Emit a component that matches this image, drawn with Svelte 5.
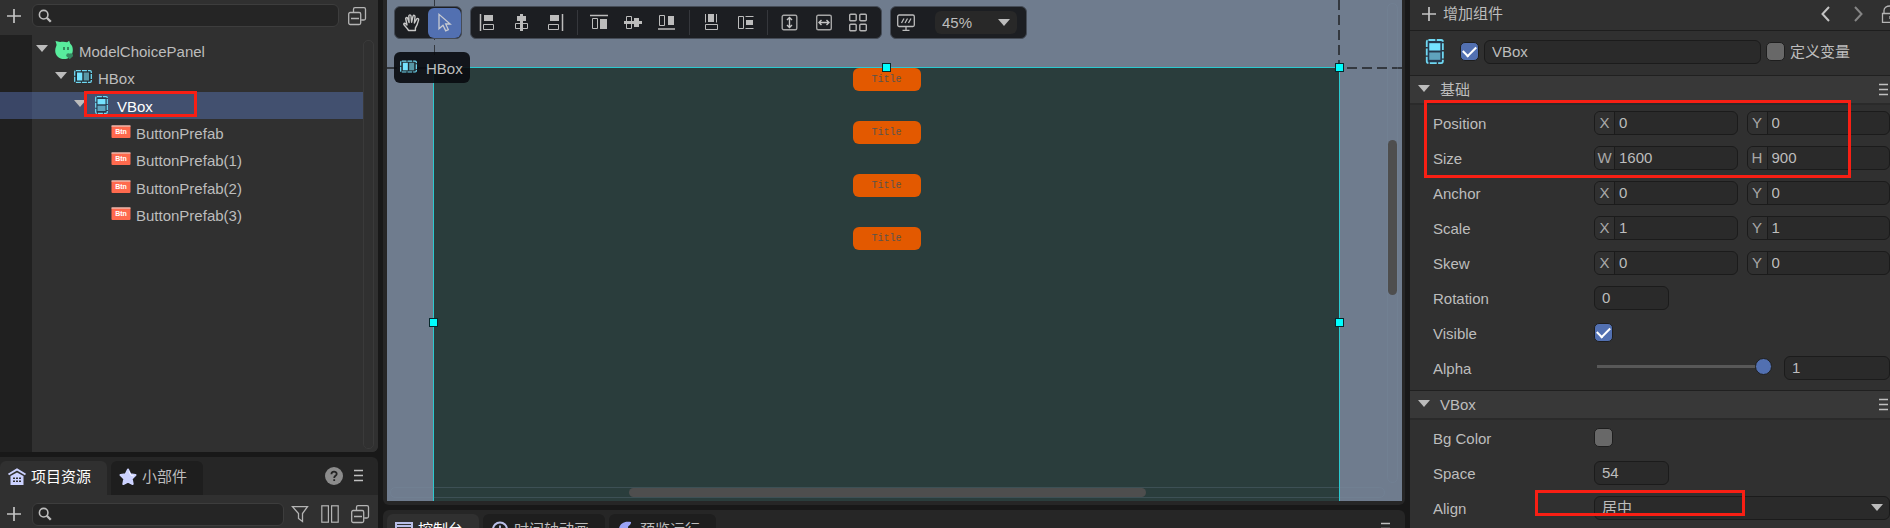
<script>
	const tree = [
		{ name: "ModelChoicePanel", level: 0, icon: "prefab", open: true },
		{ name: "HBox", level: 1, icon: "hbox", open: true },
		{ name: "VBox", level: 2, icon: "vbox", open: true },
		{ name: "ButtonPrefab", level: 3, icon: "btn" },
		{ name: "ButtonPrefab(1)", level: 3, icon: "btn" },
		{ name: "ButtonPrefab(2)", level: 3, icon: "btn" },
		{ name: "ButtonPrefab(3)", level: 3, icon: "btn" },
	];

	const alignTools = [
		["alignLeft", "alignCenter", "alignRight"],
		["alignTop", "alignMiddle", "alignBottom"],
		["spaceV", "spaceH"],
		["fitHeight", "fitWidth", "grid"],
	];

	const bottomTabs = [
		{ name: "控制台", icon: "console" },
		{ name: "时间轴动画", icon: "clock" },
		{ name: "预览运行", icon: "rocket" },
	];

	let selected = $state("VBox");
	let tool = $state("select");
	let assetTab = $state("项目资源");
	let bottomTab = $state("控制台");
	let nodeName = $state("VBox");
	let alpha = $state(1);

	let transform = $state([
		{ label: "Position", keys: ["X", "Y"], values: ["0", "0"] },
		{ label: "Size", keys: ["W", "H"], values: ["1600", "900"] },
		{ label: "Anchor", keys: ["X", "Y"], values: ["0", "0"] },
		{ label: "Scale", keys: ["X", "Y"], values: ["1", "1"] },
		{ label: "Skew", keys: ["X", "Y"], values: ["0", "0"] },
	]);

	const icons = {
		plus: `<path d="M9 2v14M2 9h14" stroke="#c4c4c4" stroke-width="1.7"/>`,
		search: `<circle cx="7.5" cy="7.5" r="4.8" fill="none" stroke="#bdbdbd" stroke-width="1.8"/><path d="M11 11l4.5 4.500" stroke="#bdbdbd" stroke-width="2.6"/>`,
		collapse: `<g fill="none" stroke="#b4b4b4" stroke-width="1.3"><rect x="0.7" y="5.5" width="12" height="12" rx="1.5"/><path d="M5.5 5V2.2a1.5 1.5 0 0 1 1.5-1.5h9a1.5 1.5 0 0 1 1.5 1.5v9.3a1.5 1.5 0 0 1-1.5 1.5h-2.8M3 11.5h8"/></g>`,
		menu: `<path d="M4 3.500h9M4 8.500h9M4 13.500h9" stroke="#c0c0c0" stroke-width="1.400"/>`,
		filter: `<path d="M1.5 1.7h15L11.500 8.500v8L7.500 13.500v-5z" fill="none" stroke="#b4b4b4" stroke-width="1.3"/>`,
		columns: `<g fill="none" stroke="#b4b4b4" stroke-width="1.2"><rect x="0.8" y="0.8" width="6.6" height="16.4"/><rect x="10.6" y="0.8" width="6.6" height="16.4"/></g>`,
		help: `<circle cx="9" cy="9" r="9" fill="#8c8c8c"/><path d="M6.4 7.2c0-3.4 5.3-3.3 5.3-.3 0 1.9-2.5 1.900-2.500 4M9.200 12.200v1.800" fill="none" stroke="#252525" stroke-width="1.8"/>`,
		prefab: `<path d="M.5 0c2 .2 3 .9 4.600 1.100 1.900-.5 5-.5 7 .2l2-1.500 1.200 3c2.200 2 2.500 4 2.500 6.400 0 5-3.800 8.800-8.600 8.800C4 18 .2 14.500 .2 9.700.2 6.500 1.700 5 1.500 3.500z" fill="#58ec9d"/><path d="M9 6v3M13 6v3" stroke="#23573f" stroke-width="1.300"/><circle cx="13.300" cy="14.300" r="2" fill="#358860"/><circle cx="16" cy="14.300" r="2" fill="#358860"/><path d="M11.500 15.300h6.300L14.700 18.300z" fill="#358860"/>`,
		hbox: `<rect x=".7" y="2.700" width="16.600" height="11.600" rx="1.200" fill="#202b31" stroke="#6fd8f2" stroke-width="1.300" stroke-dasharray="5 1"/><path d="M3 4.500h5.300v8H3z" fill="#75e3ff"/><path d="M9.700 4.500H15v8H9.700z" fill="#5897a6"/>`,
		vbox: `<rect x="2.700" y=".7" width="11.600" height="16.600" rx="1.200" fill="#26394d" stroke="#6fd8f2" stroke-width="1.300" stroke-dasharray="5 1"/><path d="M4.500 3h8v5.300h-8z" fill="#75e3ff"/><path d="M4.500 9.700h8V15h-8z" fill="#5fa3bd"/>`,
		btn: `<rect x="-.5" y="2.500" width="19" height="12.500" rx="1" fill="#ff6a4e"/><path d="M-.5 3h19" stroke="#e8dcd8"/><text x="9" y="11" text-anchor="middle" font-size="7" font-weight="700" font-family="Liberation Sans, sans-serif" fill="#fff">Btn</text>`,
		house: `<path d="M.5 6.500L9 1.500l8.500 5" fill="none" stroke="#ccd2ff" stroke-width="2"/><path d="M2.500 8L9 4.500 15.500 8v9h-13z" fill="#ccd2ff"/><path d="M5 9.500h2V11H5zM8 9.500h2V11H8zM11 9.500h2V11h-2zM5 12.500h2V14H5zM8 12.500h2V14H8zM11 12.500h2V14h-2z" fill="#303030"/>`,
		star: `<path d="M9 1.500l2.300 4.800 5.200.7-3.800 3.700 1 5.300L9 13.500 4.300 16l1-5.300L1.500 7l5.200-.7z" fill="#ccd2ff" stroke="#ccd2ff" stroke-width="2" stroke-linejoin="round"/><path d="M10 3.500l2 3.800 3 .7" fill="none" stroke="#fff" stroke-width=".8"/>`,
		console: `<rect x="1" y="2" width="16" height="14" fill="none" stroke="#b9bfe8" stroke-width="2"/><path d="M1 5h16M4 9h6M4 12h9" stroke="#b9bfe8" stroke-width="2"/>`,
		clock: `<circle cx="9" cy="8.500" r="7" fill="none" stroke="#b9bfe8" stroke-width="2"/><path d="M9 4.500V10l4 1.500" fill="none" stroke="#b9bfe8" stroke-width="1.800"/>`,
		rocket: `<path d="M14 1C7-.5 1.500 3 2 9.500c.5 5 5 7 9 6 4-1.500 4.500-5 4-8-1.500 1.500-4 1-4-1C11 4.500 14.500 4 14 1z" fill="#9aa3f5"/>`,
		hand: `<path d="M5.500 16.500C4.500 14 1 11.500.700 10c.600-1.300 2-.6 3.300 1L2.700 4.500c.3-1.500 1.700-1.200 2 0l1.400 4-.3-6.500c.4-1.500 1.900-1.400 2.200 0l.6 6.200 1.400-6c.6-1.400 2.100-1 2 .5l-.6 6.300 2.300-4c.9-1.200 2.200-.4 1.900.9-.8 3.400-1.700 5.800-3.200 8.100v2.500z" fill="none" stroke="#c8c8c8" stroke-width="1.400" stroke-linejoin="round"/>`,
		select: `<path d="M3 .3v14.500l4-3.600 2.700 5.600 2.600-1.200-2.600-5.600h4.500z" fill="none" stroke="#c8cbd2" stroke-width="1.300"/>`,
		alignLeft: `<g stroke="#bcbcbc"><path d="M1.500 0v17" stroke-width="1.500"/><path d="M5 1h9v6H5z" fill="#bcbcbc" stroke="none"/><path d="M4.500 10.500h10v5h-10z" fill="none"/></g>`,
		alignCenter: `<g fill="#bcbcbc"><path d="M7 0h3v17H7z"/><path d="M4 2h9v5H4z"/><path d="M2.500 9.500h12v5h-12z" fill="#191b1f" stroke="#bcbcbc"/><path d="M7 9h3v8H7z"/></g>`,
		alignRight: `<g stroke="#bcbcbc"><path d="M15.500 0v17" stroke-width="1.500"/><path d="M3 1h9v6H3z" fill="#bcbcbc" stroke="none"/><path d="M1.500 10.500h10v5h-10z" fill="none"/></g>`,
		alignTop: `<g stroke="#bcbcbc"><path d="M-1 1.500h18" stroke-width="1.500"/><path d="M9 5h7v10H9z" fill="#bcbcbc" stroke="none"/><path d="M1.500 4.500h5v10h-5z" fill="none"/></g>`,
		alignMiddle: `<g fill="#bcbcbc"><path d="M-1 7h18v3H-1z"/><path d="M9 4h5v9H9z"/><path d="M1.500 2.500h5v12h-5z" fill="#191b1f" stroke="#bcbcbc"/><path d="M-1 7h8v3h-8z"/></g>`,
		alignBottom: `<g stroke="#bcbcbc"><path d="M-1 15h17" stroke-width="1.500"/><path d="M9 2h6v9H9z" fill="#bcbcbc" stroke="none"/><path d="M.5 1.500h5v10h-5z" fill="none"/></g>`,
		spaceV: `<path d="M5 0h6v8H5z" fill="#bcbcbc"/><path d="M2.500 0v8.500M13.500 0v8.500M2.500 10.500h12v5h-12z" fill="none" stroke="#bcbcbc"/>`,
		spaceH: `<path d="M9 6h7v5H9z" fill="#bcbcbc"/><path d="M1.500 2.500h5v12h-5zM8.500 2.500h8M8.500 14.500h8" fill="none" stroke="#bcbcbc"/>`,
		fitHeight: `<rect x="1.200" y="1.200" width="14.600" height="14.600" rx="1.500" fill="none" stroke="#a5a5a5" stroke-width="1.400"/><path d="M8.500 3.500v10M6 6l2.500-2.500L11 6M6 11l2.500 2.500L11 11" fill="none" stroke="#c4c4c4" stroke-width="1.400"/>`,
		fitWidth: `<rect x="1.700" y="1.200" width="14.600" height="14.600" rx="1.500" fill="none" stroke="#a5a5a5" stroke-width="1.400"/><path d="M4 8.500h10M6.500 6L4 8.500 6.500 11M11.500 6L14 8.500 11.500 11" fill="none" stroke="#c4c4c4" stroke-width="1.400"/>`,
		grid: `<g fill="none" stroke="#b4b4b4" stroke-width="1.400"><rect x=".7" y=".2" width="6.500" height="6.500" rx="1"/><rect x="10.800" y=".2" width="6.500" height="6.500" rx="1"/><rect x=".7" y="10.300" width="6.500" height="6.500" rx="1"/><rect x="10.800" y="10.300" width="6.500" height="6.500" rx="1"/></g>`,
		monitor: `<g fill="none" stroke="#bcbcbc" stroke-width="1.300"><rect x=".7" y="1" width="16.600" height="11.500" rx="1.500"/><path d="M9 13v3.500M5.500 16.300h7M4.500 9L7 4.500M8 9l2.500-4.500M11.500 9L14 4.500"/></g>`,
		prev: `<path d="M12 2L5.500 9l6.500 7" fill="none" stroke="#c4c4c4" stroke-width="2"/>`,
		next: `<path d="M6 2l6.500 7L6 16" fill="none" stroke="#858585" stroke-width="2"/>`,
		lock: `<path d="M1.500 8.500h15v8.800h-15zM3 8V5.500c0-6 12-6 12 0V8M9 11v3" fill="none" stroke="#b4b4b4" stroke-width="1.300"/>`,
	};
</script>

{#snippet icon(name)}
	<svg class="icon" viewBox="0 0 18 18" aria-hidden="true">{@html icons[name]}</svg>
{/snippet}

{#snippet caret()}
	<svg class="caret" viewBox="0 0 12 7" aria-hidden="true"><path d="M0 0h12L6 7z" fill="#bcbcbc" /></svg>
{/snippet}

<div class="editor">
	<aside class="left">
		<section class="panel hierarchy">
			<div class="searchbar">
				<button class="icon-btn" aria-label="Add node">{@render icon("plus")}</button>
				<label class="search">
					{@render icon("search")}
					<input type="text" aria-label="Search nodes" />
				</label>
				<button class="icon-btn end" aria-label="Collapse all">{@render icon("collapse")}</button>
			</div>
			<div class="tree-wrap">
				<div class="tree">
					{#each tree as node}
						<button
							class="node"
							class:selected={selected === node.name}
							style="padding-left: {36 + node.level * 19}px"
							onclick={() => (selected = node.name)}
						>
							<span class="twisty">{#if node.open}{@render caret()}{/if}</span>
							{@render icon(node.icon)}
							<span class="node-name">{node.name}</span>
							{#if node.name === "VBox"}<span class="mark mark-node"></span>{/if}
						</button>
					{/each}
				</div>
				<div class="track"></div>
			</div>
		</section>

		<section class="panel assets">
			<div class="tabs">
				{#each [["项目资源", "house"], ["小部件", "star"]] as [name, glyph]}
					<button class="tab" class:active={assetTab === name} onclick={() => (assetTab = name)}>
						{@render icon(glyph)}
						{name}
					</button>
				{/each}
				<div class="tab-tools">
					<button class="icon-btn" aria-label="Help">{@render icon("help")}</button>
					<button class="icon-btn" aria-label="Menu">{@render icon("menu")}</button>
				</div>
			</div>
			<div class="searchbar asset-bar">
				<button class="icon-btn" aria-label="Add asset">{@render icon("plus")}</button>
				<label class="search">
					{@render icon("search")}
					<input type="text" aria-label="Search assets" />
				</label>
				<div class="asset-tools">
					<button class="icon-btn" aria-label="Filter">{@render icon("filter")}</button>
					<button class="icon-btn" aria-label="Two columns">{@render icon("columns")}</button>
					<button class="icon-btn" aria-label="Collapse all">{@render icon("collapse")}</button>
				</div>
			</div>
		</section>
	</aside>

	<main class="center">
		<section class="panel scene">
			<div class="viewport">
				<div class="guide guide-left"></div>
				<div class="guide guide-right"></div>
				<div class="guide guide-top"></div>

				<div class="artboard">
					{#each [1, 2, 3, 4] as n (n)}
						<button class="prefab">Title</button>
					{/each}
					<i class="handle top"></i>
					<i class="handle corner"></i>
					<i class="handle west"></i>
					<i class="handle east"></i>
				</div>

				<div class="toolbars">
					<div class="toolbar modes">
						{#each ["hand", "select"] as mode}
							<button class="mode" class:active={tool === mode} aria-label={mode} onclick={() => (tool = mode)}>
								{@render icon(mode)}
							</button>
						{/each}
					</div>
					<div class="toolbar aligns">
						{#each alignTools as group}
							<div class="group">
								{#each group as name}
									<button class="align" aria-label={name}>{@render icon(name)}</button>
								{/each}
							</div>
						{/each}
					</div>
					<div class="toolbar view">
						<button class="icon-btn" aria-label="Resolution">{@render icon("monitor")}</button>
						<div class="select zoom">
							<select aria-label="Zoom">
								<option>45%</option>
								<option>100%</option>
							</select>
							{@render caret()}
						</div>
					</div>
				</div>
				<div class="crumb">{@render icon("hbox")}<span>HBox</span></div>

				<div class="vtrack"><div class="vthumb"></div></div>
				<div class="htrack"><div class="hthumb"></div></div>
			</div>
		</section>

		<section class="panel output">
			<div class="tabs">
				{#each bottomTabs as tab}
					<button class="tab" class:active={bottomTab === tab.name} onclick={() => (bottomTab = tab.name)}>
						{@render icon(tab.icon)}
						{tab.name}
					</button>
				{/each}
				<div class="tab-tools">
					<button class="icon-btn" aria-label="Menu">{@render icon("menu")}</button>
				</div>
			</div>
		</section>
	</main>

	<aside class="inspector">
		<header class="add-row">
			<button class="add">{@render icon("plus")}增加组件</button>
			<div class="history">
				<button class="icon-btn" aria-label="Back">{@render icon("prev")}</button>
				<button class="icon-btn" aria-label="Forward">{@render icon("next")}</button>
				<button class="icon-btn" aria-label="Lock">{@render icon("lock")}</button>
			</div>
		</header>

		<div class="name-row">
			<span class="type-icon">{@render icon("vbox")}</span>
			<input type="checkbox" aria-label="Active" checked />
			<input class="field name" type="text" aria-label="Name" bind:value={nodeName} />
			<input id="define" type="checkbox" />
			<label for="define">定义变量</label>
		</div>

		<section>
			<h2>{@render caret()}<span>基础</span><button class="icon-btn" aria-label="Menu">{@render icon("menu")}</button></h2>
			<div class="props">
				<span class="mark mark-transform"></span>
				{#each transform as row}
					<div class="prop">
						<label for={row.label}>{row.label}</label>
						<div class="pair">
							<div class="field keyed">
								<span>{row.keys[0]}</span>
								<input id={row.label} type="text" bind:value={row.values[0]} />
							</div>
							<div class="field keyed">
								<span>{row.keys[1]}</span>
								<input type="text" aria-label="{row.label} {row.keys[1]}" bind:value={row.values[1]} />
							</div>
						</div>
					</div>
				{/each}
				<div class="prop">
					<label for="rotation">Rotation</label>
					<input id="rotation" class="field short" type="text" value="0" />
				</div>
				<div class="prop">
					<label for="visible">Visible</label>
					<input id="visible" type="checkbox" checked />
				</div>
				<div class="prop">
					<label for="alpha">Alpha</label>
					<div class="alpha">
						<input id="alpha" type="range" min="0" max="1" step="0.01" bind:value={alpha} />
						<input class="field" type="text" aria-label="Alpha value" bind:value={alpha} />
					</div>
				</div>
			</div>
		</section>

		<section>
			<h2>{@render caret()}<span>VBox</span><button class="icon-btn" aria-label="Menu">{@render icon("menu")}</button></h2>
			<div class="props">
				<div class="prop">
					<label for="bg">Bg Color</label>
					<input id="bg" type="checkbox" />
				</div>
				<div class="prop">
					<label for="space">Space</label>
					<input id="space" class="field short" type="text" value="54" />
				</div>
				<div class="prop">
					<label for="align">Align</label>
					<div class="select">
						<select id="align" class="field">
							<option>居中</option>
							<option>左对齐</option>
							<option>右对齐</option>
						</select>
						{@render caret()}
					</div>
					<span class="mark mark-align"></span>
				</div>
			</div>
		</section>
	</aside>
</div>

<style>
	:global(body) {
		background: #181818;
		overflow: hidden;
	}

	.editor {
		display: grid;
		grid-template-columns: 378px minmax(0, 1fr) 480px;
		gap: 5px;
		height: 100vh;
		overflow: hidden;
		background: #181818;
		color: #bdbdbd;
		font: 15px/20px "Liberation Sans", "Noto Sans CJK SC", sans-serif;
	}

	.editor * {
		box-sizing: border-box;
	}

	button,
	input,
	select {
		margin: 0;
		padding: 0;
		border: 0;
		background: none;
		color: inherit;
		font: inherit;
		outline: none;
	}

	.icon {
		display: block;
		flex: none;
		width: 18px;
		height: 18px;
		overflow: visible;
	}

	.caret {
		display: block;
		flex: none;
		width: 12px;
		height: 7px;
	}

	.icon-btn {
		display: flex;
		flex: none;
	}

	.mark {
		position: absolute;
		z-index: 2;
		border: 3px solid #f81f14;
		pointer-events: none;
	}

	/* left column */
	.left,
	.center {
		display: grid;
		gap: 5px;
		min-height: 0;
	}

	.left {
		grid-template-rows: minmax(0, 1fr) 71px;
	}

	.panel {
		overflow: hidden;
		background: #262626;
	}

	.hierarchy {
		display: flex;
		flex-direction: column;
		background: #303030;
		border-radius: 0 0 6px 0;
	}

	.searchbar {
		display: flex;
		align-items: center;
		height: 35px;
		padding: 0 12px 4px 5px;
	}

	.search {
		display: flex;
		flex: 1;
		align-items: center;
		height: 23px;
		margin-left: 9px;
		padding-left: 4px;
		background: #252525;
		border: 1px solid #3d3d3d;
		border-radius: 6px;
	}

	.search .icon {
		width: 16px;
		height: 16px;
	}

	.search input {
		flex: 1;
		min-width: 0;
	}

	.end {
		margin-left: 9px;
	}

	.tree-wrap {
		position: relative;
		display: flex;
		flex: 1;
		padding: 2px 4px 3px 0;
		background: linear-gradient(90deg, #202020 32px, #303030 32px);
	}

	.tree {
		display: grid;
		flex: 1;
		grid-template-rows: repeat(7, 1fr);
		height: 192px;
	}

	.node {
		position: relative;
		display: flex;
		align-items: center;
		text-align: left;
	}

	.node .icon {
		margin: 0 6px 2px 7px;
	}

	.twisty {
		width: 12px;
		padding-bottom: 5px;
	}

	.node-name {
		padding-top: 2px;
	}

	.selected {
		background: linear-gradient(90deg, #3a4666 32px, #42506f 32px);
		color: #fff;
	}

	.mark-node {
		top: -1px;
		left: 84px;
		width: 113px;
		height: 26px;
	}

	.track {
		width: 11px;
		border: 1px solid #3a3a3a;
		border-radius: 5px;
		margin-top: 3px;
	}

	.assets {
		border-radius: 0 6px 0 0;
	}

	.tabs {
		display: flex;
		gap: 4px;
		height: 38px;
		padding-top: 4px;
	}

	.tab {
		display: flex;
		align-items: center;
		gap: 5px;
		padding: 0 16px 2px 8px;
		background: #1e1e1e;
		border-radius: 6px 6px 0 0;
	}

	.tab.active {
		background: #303030;
		color: #fff;
	}

	.tab-tools {
		display: flex;
		align-items: center;
		gap: 7px;
		margin-left: auto;
		padding: 0 10px 4px 0;
	}

	.asset-bar {
		height: 38px;
		padding: 0 9px 0 5px;
		background: #303030;
	}

	.asset-tools {
		display: flex;
		gap: 12px;
		margin-left: 7px;
	}

	/* scene */
	.center {
		grid-template-rows: minmax(0, 1fr) 18px;
	}

	.scene {
		padding: 0 3px 4px 4px;
		border-radius: 0 0 6px 6px;
	}

	.viewport {
		position: relative;
		height: 100%;
		overflow: hidden;
		background: #6f7c8e;
	}

	.artboard {
		position: relative;
		display: flex;
		flex-direction: column;
		align-items: center;
		gap: 30px;
		height: 511px;
		margin: 67px 62px 0 46px;
		background: #2a3d3c;
		border: 1px solid #2bc9cf;
	}

	.prefab {
		width: 68px;
		height: 23px;
		flex: none;
		background: #e35900;
		border-radius: 6px;
		color: #59544c;
		font: 10px/23px "Liberation Mono", monospace;
	}

	.guide {
		position: absolute;
		background: repeating-linear-gradient(180deg, #33383f 0 10px, transparent 10px 15px);
	}

	.guide-left,
	.guide-right {
		top: 0;
		width: 1px;
		height: 67px;
	}

	.guide-left {
		left: 47px;
	}

	.guide-right {
		right: 62px;
		width: 2px;
	}

	.guide-top {
		top: 67px;
		left: 0;
		right: 0;
		height: 2px;
		background: repeating-linear-gradient(90deg, #33383f 0 10px, transparent 10px 15px);
	}

	.handle {
		position: absolute;
		width: 9px;
		height: 9px;
		background: #0ff;
		border: 1px solid #06292c;
	}

	.top {
		top: -5px;
		left: calc(50% - 5px);
	}

	.corner {
		top: -5px;
		right: -5px;
	}

	.west {
		top: calc(50% - 5px);
		left: -5px;
	}

	.east {
		top: calc(50% - 5px);
		right: -5px;
	}

	.toolbars {
		position: absolute;
		top: 6px;
		left: 7px;
		display: flex;
		gap: 8px;
	}

	.toolbar {
		display: flex;
		align-items: center;
		height: 33px;
		background: #1c1e22;
		border: 1px solid #454c57;
		border-radius: 6px;
	}

	.mode {
		display: grid;
		place-items: center;
		width: 33px;
		height: 30px;
	}

	.mode.active {
		background: #5270b1;
		border-radius: 6px;
	}

	.aligns {
		padding-right: 6px;
	}

	.group {
		display: flex;
	}

	.group + .group {
		margin-left: 4px;
		padding-left: 5px;
		border-left: 1px solid #35373c;
	}

	.align {
		display: grid;
		place-items: center;
		width: 34px;
		height: 25px;
	}

	.view {
		padding: 0 9px 0 6px;
		gap: 20px;
	}

	.select {
		position: relative;
		display: flex;
		align-items: center;
	}

	.select select {
		width: 100%;
		padding-left: 7px;
		appearance: none;
	}

	.select .caret {
		position: absolute;
		right: 7px;
		pointer-events: none;
	}

	.zoom {
		width: 82px;
		height: 23px;
		background: #282828;
		border-radius: 6px;
	}

	.crumb {
		position: absolute;
		top: 52px;
		left: 7px;
		display: flex;
		align-items: center;
		gap: 9px;
		height: 31px;
		padding: 3px 7px 0 6px;
		background: rgba(8, 10, 14, 0.9);
		border-radius: 6px;
	}

	.crumb .icon {
		width: 17px;
		margin-bottom: 5px;
	}

	.vtrack,
	.htrack {
		position: absolute;
		border: 1px solid rgba(120, 140, 160, 0.25);
		border-radius: 6px;
	}

	.vtrack {
		top: 3px;
		right: 4px;
		bottom: 18px;
		width: 11px;
		padding-top: 136px;
	}

	.htrack {
		right: 17px;
		bottom: 3px;
		left: 3px;
		height: 11px;
	}

	.vthumb,
	.hthumb {
		background: #4e4e4e;
		border-radius: 5px;
	}

	.vthumb {
		height: 155px;
	}

	.hthumb {
		width: 52%;
		height: 9px;
		margin-left: 24%;
	}

	.output {
		border-radius: 6px 6px 0 0;
	}

	.output .tabs {
		padding-left: 4px;
	}

	/* inspector */
	.inspector {
		overflow: hidden;
		background: #303030;
	}

	.add-row {
		display: flex;
		align-items: center;
		justify-content: space-between;
		height: 31px;
		padding: 0 0 3px 10px;
		border-bottom: 1px solid #1e1e1e;
	}

	.add {
		display: flex;
		align-items: center;
		gap: 5px;
	}

	.history {
		display: flex;
		gap: 14px;
		margin-right: -9px;
	}

	.name-row {
		display: flex;
		align-items: center;
		gap: 5px;
		height: 44px;
		padding: 0 40px 3px 17px;
	}

	.type-icon {
		margin-right: 11px;
	}

	.type-icon .icon {
		width: 25px;
		height: 25px;
		margin: 0 -4px;
	}

	.name {
		flex: 1;
		min-width: 0;
		padding-left: 7px;
	}

	.name-row label {
		white-space: nowrap;
	}

	.field {
		height: 24px;
		background: #2a2a2a;
		border: 1px solid #1b1b1b;
		border-radius: 6px;
		padding-left: 7px;
	}

	input[type="checkbox"] {
		display: grid;
		flex: none;
		place-items: center;
		width: 19px;
		height: 19px;
		appearance: none;
		background: #686868;
		border: 1px solid #1e1e1e;
		border-radius: 5px;
	}

	input[type="checkbox"]:checked {
		background: #5270b1;
	}

	input[type="checkbox"]:checked::after {
		content: "";
		width: 11px;
		height: 6px;
		margin-bottom: 3px;
		border: solid #fff;
		border-width: 0 0 2px 2px;
		transform: rotate(-45deg);
	}

	h2 {
		display: flex;
		align-items: center;
		gap: 9px;
		height: 30px;
		margin: 0;
		padding: 0 0 0 8px;
		background: #383838;
		border-top: 1px solid #202020;
		border-bottom: 2px solid #2a2a2a;
		font-size: 15px;
		font-weight: 400;
	}

	h2 .caret {
		margin-bottom: 2px;
	}

	h2 span {
		padding-left: 1px;
	}

	h2 .icon-btn {
		margin: 0 -3px 0 auto;
	}

	.props {
		position: relative;
		padding-bottom: 5px;
	}

	.prop {
		position: relative;
		display: grid;
		grid-template-columns: 161px minmax(0, 1fr);
		align-items: center;
		height: 35px;
		padding-left: 23px;
	}

	.prop > label {
		padding-top: 3px;
	}

	.pair {
		display: grid;
		grid-template-columns: 1fr 1fr;
		gap: 9px;
	}

	.keyed {
		display: flex;
		padding: 0;
		overflow: hidden;
	}

	.keyed span {
		width: 20px;
		border-right: 1px solid #1b1b1b;
		background: #303030;
		text-align: center;
		line-height: 22px;
		color: #a8a8a8;
	}

	.keyed input {
		flex: 1;
		min-width: 0;
		padding-left: 4px;
	}

	.short {
		width: 75px;
	}

	.alpha {
		display: grid;
		grid-template-columns: 175px minmax(0, 1fr);
		gap: 12px;
		padding-left: 3px;
	}

	.alpha .field {
		min-width: 0;
	}

	input[type="range"] {
		width: 100%;
		height: 22px;
		appearance: none;
	}

	input[type="range"]::-webkit-slider-runnable-track {
		height: 3px;
		background: #585858;
	}

	input[type="range"]::-webkit-slider-thumb {
		width: 17px;
		height: 17px;
		margin-top: -7px;
		appearance: none;
		background: #5270b1;
		border: 1px solid #1e1e1e;
		border-radius: 50%;
	}

	.mark-transform {
		top: -5px;
		left: 14px;
		right: 39px;
		height: 78px;
	}

	.mark-align {
		top: 0;
		left: 125px;
		width: 210px;
		height: 26px;
	}
</style>
